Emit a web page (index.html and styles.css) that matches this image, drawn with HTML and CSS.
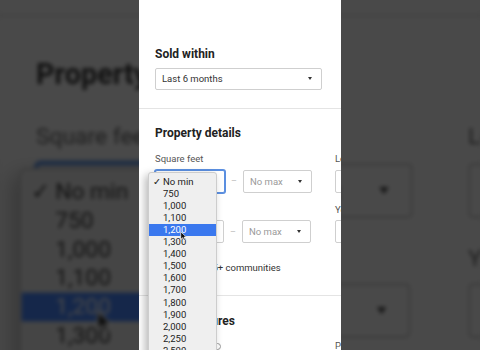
FILE: index.html
```html
<!DOCTYPE html>
<html lang="en">
<head>
    <meta charset="UTF-8">
    <meta name="viewport" content="width=device-width, initial-scale=1.0">
    <title>Filters</title>
    <link rel="stylesheet" href="styles.css">
</head>
<body>
    <div class="frame">
        <div class="backdrop" id="backdrop" aria-hidden="true"></div>

        <div class="screen" id="screen">
            <section class="group first">
                <h2>Sold within</h2>
                <div class="select wide">
                    <span>Last 6 months</span>
                    <span class="caret"></span>
                </div>
            </section>

            <section class="group">
                <h2>Property details</h2>
                <div class="fields">
                    <div class="field">
                        <div class="label">Square feet</div>
                        <div class="range">
                            <div class="select focus"><span>No min</span><span class="caret"></span></div>
                            <span class="dash">–</span>
                            <div class="select"><span class="muted">No max</span><span class="caret"></span></div>
                        </div>
                    </div>
                    <div class="field">
                        <div class="label">Lot size</div>
                        <div class="range">
                            <div class="select"><span class="muted">No min</span><span class="caret"></span></div>
                            <span class="dash">–</span>
                            <div class="select"><span class="muted">No max</span><span class="caret"></span></div>
                        </div>
                    </div>
                    <div class="field">
                        <div class="label">Stories</div>
                        <div class="range">
                            <div class="select"><span class="muted">No min</span><span class="caret"></span></div>
                            <span class="dash">–</span>
                            <div class="select"><span class="muted">No max</span><span class="caret"></span></div>
                        </div>
                    </div>
                    <div class="field">
                        <div class="label">Year built</div>
                        <div class="range">
                            <div class="select"><span class="muted">No min</span><span class="caret"></span></div>
                            <span class="dash">–</span>
                            <div class="select"><span class="muted">No max</span><span class="caret"></span></div>
                        </div>
                    </div>
                </div>
                <label class="check">
                    <span class="box"></span>
                    <span>Include 55+ communities</span>
                </label>
            </section>

            <section class="group">
                <h2>Home features</h2>
                <div class="fields">
                    <div class="label">Garage spots
                        <svg class="info" width="7" height="7" viewBox="0 0 7 7"><circle cx="3.5" cy="3.5" r="3" fill="none" stroke="#999" stroke-width="1"/></svg>
                    </div>
                    <div class="label">Pool type</div>
                </div>
            </section>

            <ul class="menu">
                <li><span class="tick">✓</span>No min</li>
                <li>750</li>
                <li>1,000</li>
                <li>1,100</li>
                <li class="hover">1,200</li>
                <li>1,300</li>
                <li>1,400</li>
                <li>1,500</li>
                <li>1,600</li>
                <li>1,700</li>
                <li>1,800</li>
                <li>1,900</li>
                <li>2,000</li>
                <li>2,250</li>
                <li>2,500</li>
                <li>2,750</li>
            </ul>

            <svg class="cursor" width="7" height="10" viewBox="0 0 10 14">
                <path d="M1 1 L1 12 L3.8 9.4 L5.8 13.2 L7.6 12.3 L5.7 8.6 L9.2 8.6 Z" fill="#111" stroke="#fff" stroke-width="1"/>
            </svg>
        </div>
    </div>

    <script>
        // the video frame shows a blurred, zoomed copy of the same screen behind it
        const screen = document.getElementById("screen");
        const copy = screen.cloneNode(true);
        copy.removeAttribute("id");
        document.getElementById("backdrop").appendChild(copy);
    </script>
</body>
</html>
```

FILE: styles.css
```css
* {
    margin: 0;
    padding: 0;
    box-sizing: border-box;
}
body {
    background: #474747;
    font-family: Roboto, "Liberation Sans", sans-serif;
    color: #222;
}
.frame {
    display: grid;
    width: 480px;
    height: 350px;
    overflow: hidden;
}
.backdrop,
.frame > .screen {
    grid-area: 1 / 1;
}
.backdrop {
    overflow: hidden;
}
.screen {
    position: relative;
    width: 202px;
    height: 350px;
    margin-left: 139px;
    background: #fff;
    overflow: hidden;
}
.backdrop .screen {
    transform: scale(2.4);
    transform-origin: 101px 175px;
    filter: blur(0.9px) contrast(0.8) brightness(0.32) saturate(1.15);
}
.group {
    padding: 16.5px 0 19.5px 16px;
    border-bottom: 1px solid #e4e4e4;
}
.group.first {
    padding-top: 46.4px;
    padding-bottom: 18px;
}
h2 {
    font-size: 12px;
    line-height: 16px;
    font-weight: 700;
    color: #222;
}
.select {
    display: flex;
    align-items: center;
    justify-content: space-between;
    width: 69px;
    height: 23px;
    padding: 0 9px 0 6px;
    border: 1px solid #cfcfcf;
    border-radius: 2px;
    background: #fff;
    font-size: 9.5px;
    color: #333;
    flex-shrink: 0;
}
.select.wide {
    width: 167px;
    height: 22px;
    margin-top: 5.6px;
}
.select.focus {
    width: 70px;
    border-color: #5b8fe0;
    box-shadow: 0 0 0 1px #5b8fe0;
}
.muted {
    color: #9a9a9a;
}
.caret {
    width: 0;
    height: 0;
    border-left: 2.5px solid transparent;
    border-right: 2.5px solid transparent;
    border-top: 3px solid #333;
}
.fields {
    display: grid;
    grid-template-columns: 157px 157px;
    column-gap: 23px;
    row-gap: 10px;
    margin-top: 10.6px;
}
.label {
    display: flex;
    align-items: center;
    gap: 3px;
    font-size: 9.5px;
    line-height: 14px;
    color: #555;
    white-space: nowrap;
}
.range {
    display: flex;
    align-items: center;
    margin-top: 3.5px;
}
.dash {
    width: 18px;
    text-align: center;
    font-size: 9px;
    color: #bbb;
}
.check {
    display: flex;
    align-items: center;
    gap: 7px;
    height: 16px;
    margin-top: 16.5px;
    font-size: 9.5px;
    color: #333;
}
.box {
    width: 12px;
    height: 12px;
    border: 1px solid #bbb;
    border-radius: 2px;
}
.menu {
    position: absolute;
    left: 9px;
    top: 172px;
    width: 69px;
    padding: 2.6px 0;
    list-style: none;
    background: #efefef;
    border: 1px solid #cdcdcd;
    border-radius: 3px;
    box-shadow: -3px 3px 9px rgba(0, 0, 0, 0.28);
    font-size: 9.5px;
    line-height: 12.1px;
    color: #222;
}
.menu li {
    padding-left: 14px;
    white-space: nowrap;
}
.menu .tick {
    display: inline-block;
    width: 10px;
    margin-left: -10px;
    font-family: "DejaVu Sans", sans-serif;
    font-size: 9.5px;
}
.menu .hover {
    background: #3a78ee;
    color: #fff;
}
.cursor {
    position: absolute;
    left: 41px;
    top: 231px;
}
```
